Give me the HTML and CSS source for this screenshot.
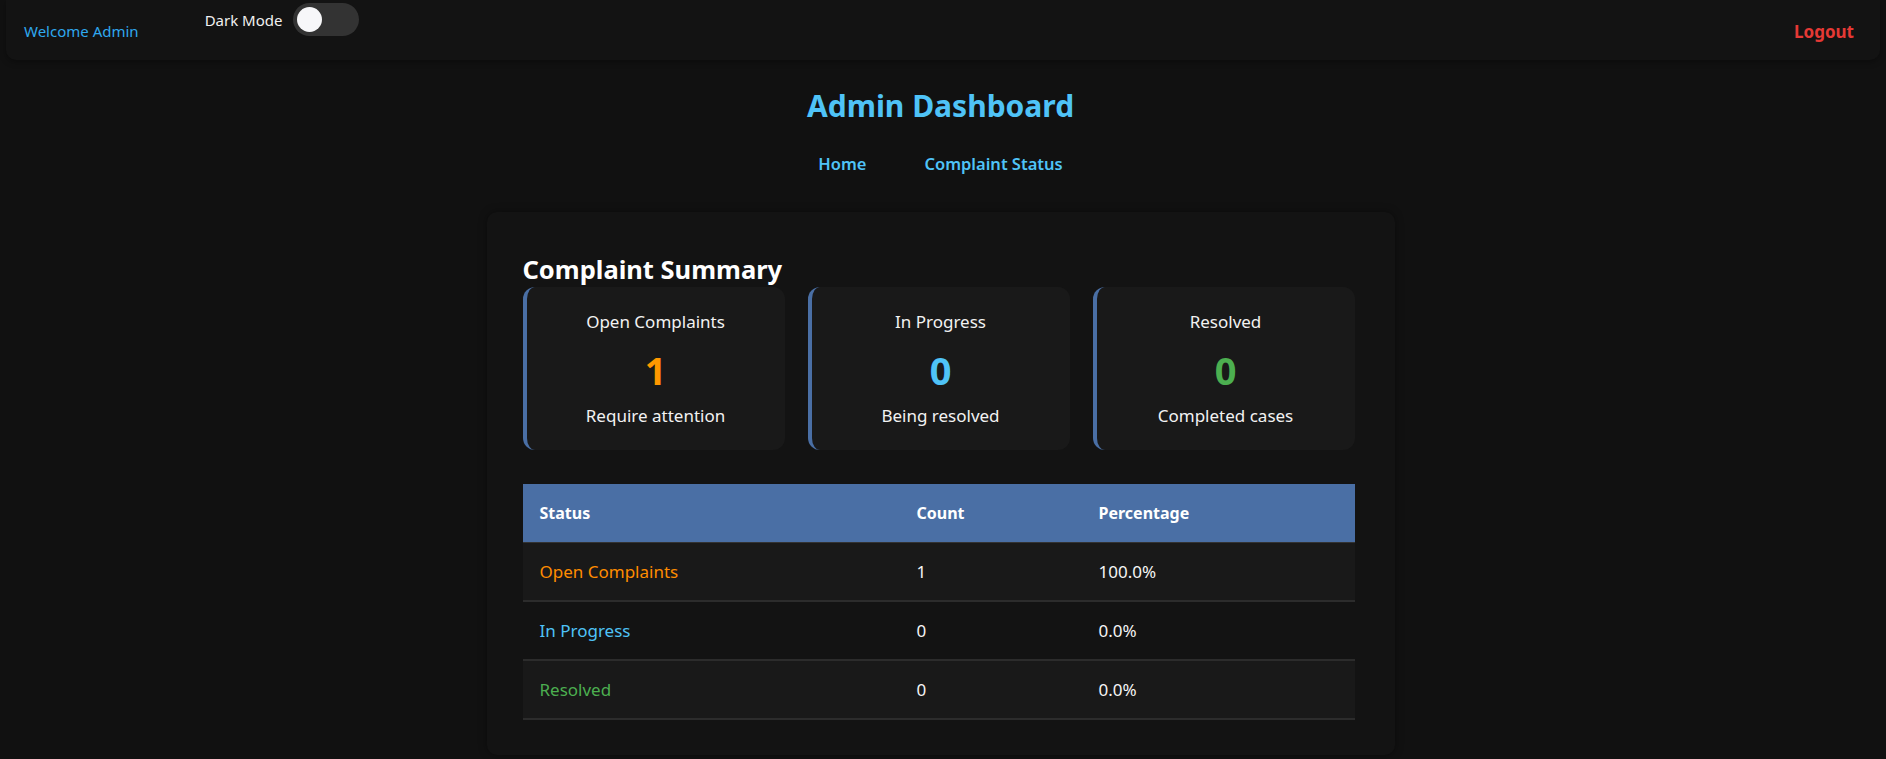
FILE: index.html
```html
<!DOCTYPE html>
<html lang="en">
<head>
<meta charset="utf-8">
<title>Admin Dashboard</title>
<link rel="stylesheet" href="styles.css">
</head>
<body>
<header class="topbar">
  <div class="topbar-left">
    <span class="welcome">Welcome Admin</span>
    <label class="mode">
      <span class="mode-label">Dark Mode</span>
      <span class="toggle"><span class="knob"></span></span>
    </label>
  </div>
  <a class="logout" href="#">Logout</a>
</header>

<main class="page">
  <h1 class="title">Admin Dashboard</h1>
  <nav class="nav">
    <a href="#">Home</a>
    <a href="#">Complaint Status</a>
  </nav>

  <section class="panel">
    <h2 class="panel-title">Complaint Summary</h2>
    <div class="cards">
      <div class="card">
        <div class="card-label">Open Complaints</div>
        <div class="card-num orange">1</div>
        <div class="card-sub">Require attention</div>
      </div>
      <div class="card">
        <div class="card-label">In Progress</div>
        <div class="card-num blue">0</div>
        <div class="card-sub">Being resolved</div>
      </div>
      <div class="card">
        <div class="card-label">Resolved</div>
        <div class="card-num green">0</div>
        <div class="card-sub">Completed cases</div>
      </div>
    </div>

    <table class="stats">
      <thead>
        <tr><th class="c1">Status</th><th class="c2">Count</th><th class="c3">Percentage</th></tr>
      </thead>
      <tbody>
        <tr class="odd"><td class="orange-t">Open Complaints</td><td>1</td><td>100.0%</td></tr>
        <tr><td class="blue">In Progress</td><td>0</td><td>0.0%</td></tr>
        <tr class="odd"><td class="green">Resolved</td><td>0</td><td>0.0%</td></tr>
      </tbody>
    </table>
  </section>
</main>
</body>
</html>
```

FILE: styles.css
```css
* { box-sizing: border-box; }
html, body {
  margin: 0;
  padding: 0;
  background: #111111;
  color: #ffffff;
  font-family: "Noto Sans", "Open Sans", sans-serif;
}
body { min-height: 759px; }

.topbar {
  margin: 0 6px;
  height: 60px;
  background: #131313;
  border-radius: 0 0 10px 10px;
  box-shadow: 0 2px 6px rgba(0,0,0,0.35);
  display: flex;
  justify-content: space-between;
  align-items: center;
  padding: 0 26px 0 18px;
}
.topbar-left {
  display: flex;
  align-items: flex-start;
  height: 100%;
}
.welcome {
  color: #2fa8ee;
  font-size: 15px;
  margin-top: 21px;
}
.mode {
  display: flex;
  align-items: center;
  margin-left: 66px;
  margin-top: 3px;
}
.mode-label {
  font-size: 15px;
  color: #f0f0f0;
  margin-right: 11px;
}
.toggle {
  display: flex;
  align-items: center;
  width: 66px;
  height: 33px;
  border-radius: 17px;
  background: #333333;
  padding: 0 4px;
}
.knob {
  width: 25px;
  height: 25px;
  border-radius: 50%;
  background: #f7f7f9;
}
.logout {
  color: #e53935;
  font-weight: 700;
  font-size: 17px;
  text-decoration: none;
  margin-top: 2px;
}

.page {
  display: flex;
  flex-direction: column;
  align-items: center;
  padding-right: 5px;
}
.title {
  margin: 26px 0 0;
  font-size: 30px;
  line-height: 40px;
  font-weight: 700;
  color: #4fc3f7;
}
.nav {
  display: flex;
  gap: 58px;
  margin-top: 27px;
}
.nav a {
  color: #4fc3f7;
  font-weight: 600;
  font-size: 16.5px;
  text-decoration: none;
  line-height: 22px;
}

.panel {
  margin-top: 37px;
  width: 908px;
  background: #131313;
  border-radius: 10px;
  box-shadow: 0 0 8px rgba(0,0,0,0.4);
  padding: 40px 40px 35px 36px;
}
.panel-title {
  margin: 0;
  font-size: 25.5px;
  line-height: 35px;
  font-weight: 700;
  color: #ffffff;
}
.cards {
  display: flex;
  gap: 23px;
}
.card {
  flex: 1;
  height: 163px;
  background: #191919;
  border-radius: 12px;
  border-left: 4px solid #4a6fa5;
  display: flex;
  flex-direction: column;
  align-items: center;
  padding-top: 23px;
}
.card-label {
  font-size: 17px;
  line-height: 24px;
  color: #f2f2f2;
}
.card-num {
  font-size: 38px;
  font-weight: 700;
  line-height: 46px;
  margin-top: 13px;
}
.card-sub {
  font-size: 17px;
  line-height: 24px;
  margin-top: 11px;
  color: #f2f2f2;
}
.orange { color: #ff9800; }
.orange-t { color: #ff8c00; }
.blue { color: #4fc3f7; }
.green { color: #4caf50; }

.stats {
  margin-top: 34px;
  width: 832px;
  border-collapse: collapse;
  font-size: 17px;
}
.stats th {
  background: #4a6fa5;
  color: #ffffff;
  font-weight: 700;
  font-size: 16px;
  text-align: left;
  height: 58px;
  padding: 0 17px;
  border-bottom: 1px solid #333;
}
.stats td {
  height: 59px;
  padding: 0 17px;
  border-bottom: 2px solid #2c2c2c;
  color: #f5f5f5;
}
.stats tr.odd td { background: #191919; }
.stats td.orange-t { color: #ff8c00; }
.stats td.blue { color: #4fc3f7; }
.stats td.green { color: #4caf50; }
.c1 { width: 377px; }
.c2 { width: 182px; }
.c3 { width: 273px; }
```
